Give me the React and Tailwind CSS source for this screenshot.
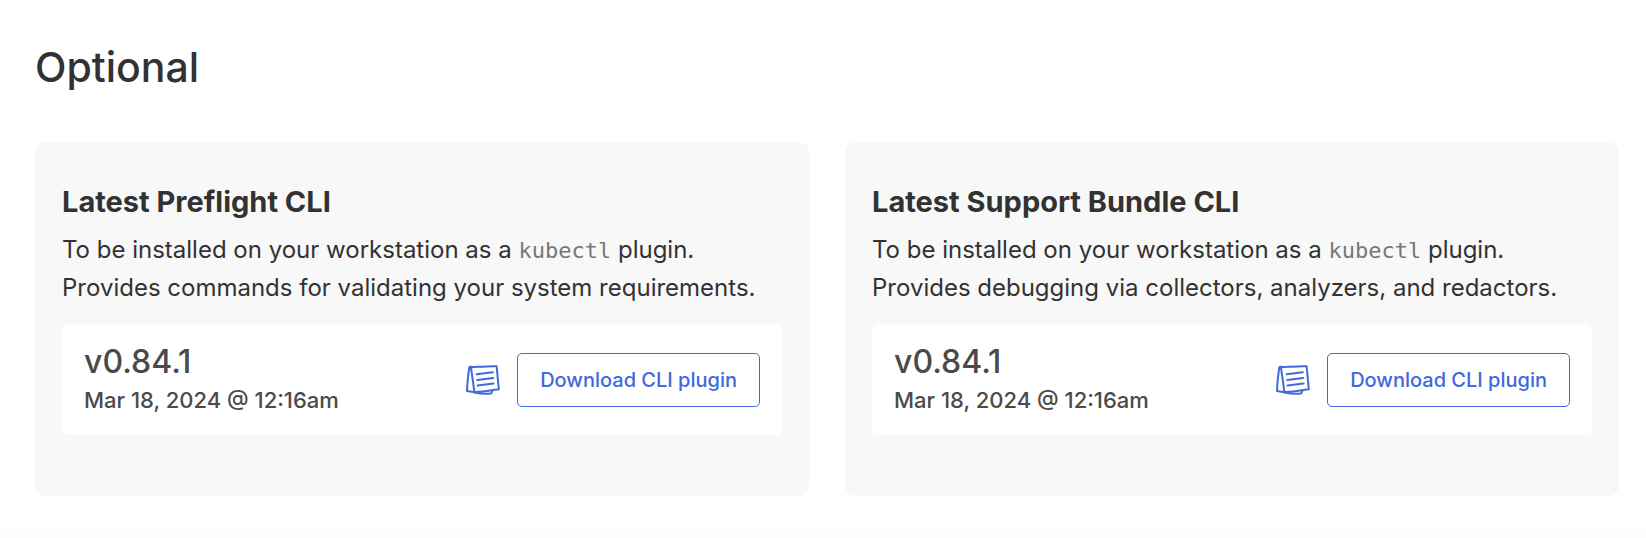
const tools = [
  {
    id: "preflight",
    title: "Latest Preflight CLI",
    detail: "Provides commands for validating your system requirements.",
  },
  {
    id: "support-bundle",
    title: "Latest Support Bundle CLI",
    detail: "Provides debugging via collectors, analyzers, and redactors.",
  },
];

function NotesIcon() {
  return (
    <svg
      viewBox="0 0 34 30"
      className="h-[30px] w-[34px]"
      fill="none"
      stroke="currentColor"
      strokeWidth="2"
      strokeLinecap="round"
      strokeLinejoin="round"
      aria-hidden="true"
    >
      <path d="M4.9 2.3 C13 1.9 22 0.9 30.6 1.2 C31.4 8.8 32 16.4 32.8 24.2 C25 25.4 17 26.9 8.4 27.2 C7.4 19 6.2 10.6 4.9 2.3 Z" />
      <path d="M4.9 1.6 L3.3 2.2 C2.2 10 1.2 18 1 26 L8.4 27.2" />
      <path d="M8.5 27.4 C14.5 28.7 20 28.9 25 28.4 L26.2 26.4" />
      <path d="M10.7 9.3 L26.8 7.3 M11.2 14.9 L27.2 12.9 M11.6 20.6 L27.6 18.4" />
    </svg>
  );
}

function ToolCard({ tool }) {
  return (
    <section
      aria-labelledby={tool.id}
      className="rounded-[10px] bg-[#f8f8f8] px-[27px] pt-10 pb-[61px]"
    >
      <h2 id={tool.id} className="text-[29px] leading-10 font-bold">
        {tool.title}
      </h2>
      <p className="mt-[9px] text-[24px] leading-[38px]">
        To be installed on your workstation as a{" "}
        <code className="font-['DejaVu_Sans_Mono',monospace] text-[22px] leading-none text-[#777777]">
          kubectl
        </code>{" "}
        plugin.
        <br />
        {tool.detail}
      </p>
      <div className="mt-[17px] flex items-center justify-between rounded-md bg-white px-[22px] py-[17px] text-[#4a4a4a]">
        <div className="font-medium">
          <p className="text-[32px] leading-[42px]">v0.84.1</p>
          <p className="text-[22px] leading-[35px]">Mar 18, 2024 @ 12:16am</p>
        </div>
        <div className="flex items-center gap-[17px] text-[#4069dc]">
          <a href="#release-notes" aria-label="Release notes">
            <NotesIcon />
          </a>
          <button
            type="button"
            className="rounded-[5px] border border-current px-[22px] py-3 text-[20px] leading-[28px] font-medium"
          >
            Download CLI plugin
          </button>
        </div>
      </div>
    </section>
  );
}

export default function App() {
  return (
    <div className="bg-white font-['Inter',sans-serif] text-[#323232]">
      <main className="pt-10 pr-[27px] pb-[23px] pl-[35px]">
        <h1 className="text-[41px] leading-[54px] font-medium">Optional</h1>
        <div className="mt-12 grid grid-cols-2 gap-9">
          {tools.map((tool) => (
            <ToolCard key={tool.id} tool={tool} />
          ))}
        </div>
      </main>
      <div className="h-[19px] bg-linear-to-b from-white to-[#fcfcfc]" />
    </div>
  );
}
